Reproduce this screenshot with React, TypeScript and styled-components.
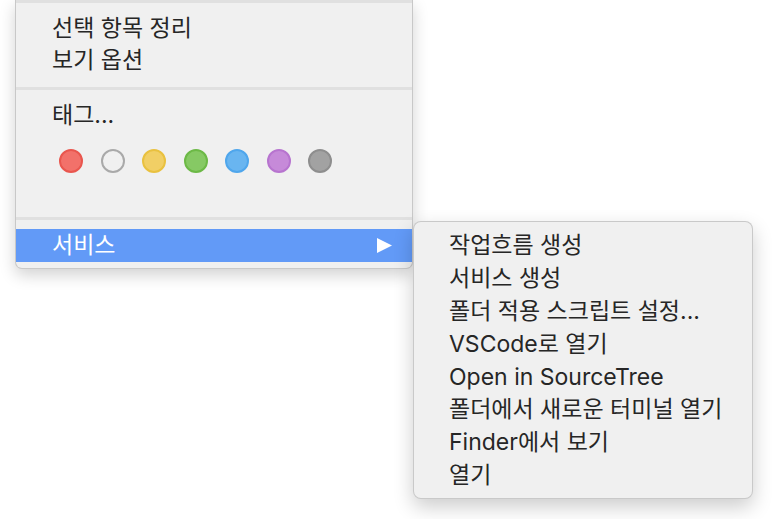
import * as React from 'react'
import styled, { createGlobalStyle } from 'styled-components'

const GlobalStyle = createGlobalStyle`
	html, body {
		margin: 0;
		padding: 0;
		background: #ffffff;
	}
	body {
		font-family: Inter, "Noto Sans CJK KR", sans-serif;
		-webkit-font-smoothing: antialiased;
	}
`

type Tag = { fill: string, ring: string }

// Finder tag colours
const tags: Tag[] = [
	{ fill: '#f2716a', ring: '#e9564e' },
	{ fill: '#f0f0f0', ring: '#a9a9a9' },
	{ fill: '#f1cf65', ring: '#e9c13f' },
	{ fill: '#86c964', ring: '#6cb946' },
	{ fill: '#69b5f0', ring: '#4fa6ec' },
	{ fill: '#c68ad9', ring: '#b774cf' },
	{ fill: '#a2a2a2', ring: '#8e8e8e' }
]

const services = [
	'작업흐름 생성',
	'서비스 생성',
	'폴더 적용 스크립트 설정...',
	'VSCode로 열기',
	'Open in SourceTree',
	'폴더에서 새로운 터미널 열기',
	'Finder에서 보기',
	'열기'
]

const App: React.FC = () => {
	return (
		<Page>
			<GlobalStyle />

			<Menu>
				<Separator />
				<Item>선택 항목 정리</Item>
				<Item>보기 옵션</Item>
				<Separator />
				<Item>태그...</Item>

				{/* Tag colour dots */}
				<TagRow>
					{tags.map((tag, index) => <Dot key={index} $fill={tag.fill} $ring={tag.ring} />)}
				</TagRow>

				<Separator />

				<SubmenuHost>
					<Item $active>
						서비스
						<Arrow viewBox="0 0 15 15">
							<polygon points="0,0 15,7.5 0,15" fill="#ffffff" />
						</Arrow>
					</Item>

					{/* Services submenu */}
					<Submenu>
						{services.map((label, index) => <SubItem key={index}>{label}</SubItem>)}
					</Submenu>
				</SubmenuHost>
			</Menu>
		</Page>
	)
}

export default App

const Page = styled.div`
	width: 773px;
	height: 519px;
	padding-left: 15px;
	box-sizing: border-box;
	overflow: hidden;
`

const Menu = styled.div`
	width: 398px;
	box-sizing: border-box;
	background: #f0f0f0;
	border: 1px solid rgba(0, 0, 0, 0.16);
	border-top: none;
	border-radius: 0 0 7px 7px;
	padding-bottom: 6px;
	box-shadow: 0 6px 16px rgba(0, 0, 0, 0.18);
`

const Separator = styled.div`
	height: 3px;
	margin: 11px 0 9px;
	background: #e0e0e0;

	&:first-child {
		margin-top: 0;
	}
`

const Item = styled.div<{ $active?: boolean }>`
	display: flex;
	align-items: center;
	justify-content: space-between;
	height: ${p => (p.$active ? '33px' : '32px')};
	padding: 0 20px 0 36px;
	font-size: 23px;
	line-height: 1;
	color: ${p => (p.$active ? '#ffffff' : '#262626')};
	background: ${p => (p.$active ? '#629af7' : 'transparent')};
`

const Arrow = styled.svg`
	width: 15px;
	height: 15px;
`

const TagRow = styled.div`
	display: flex;
	gap: 17.5px;
	padding: 18px 0 33px 43px;
`

const Dot = styled.span<{ $fill: string, $ring: string }>`
	width: 24px;
	height: 24px;
	box-sizing: border-box;
	border-radius: 50%;
	background: ${p => p.$fill};
	border: 2px solid ${p => p.$ring};
`

const SubmenuHost = styled.div`
	position: relative;
`

const Submenu = styled.div`
	position: absolute;
	left: calc(100% + 1px);
	top: -8px;
	width: 340px;
	box-sizing: border-box;
	padding: 7px 0 6px;
	background: #f0f0f0;
	border: 1px solid rgba(0, 0, 0, 0.16);
	border-radius: 8px;
	box-shadow: 0 8px 20px rgba(0, 0, 0, 0.2);
`

const SubItem = styled.div`
	display: flex;
	align-items: center;
	height: 32.9px;
	padding-left: 35px;
	font-size: 23px;
	line-height: 1;
	color: #262626;
	white-space: nowrap;
`
